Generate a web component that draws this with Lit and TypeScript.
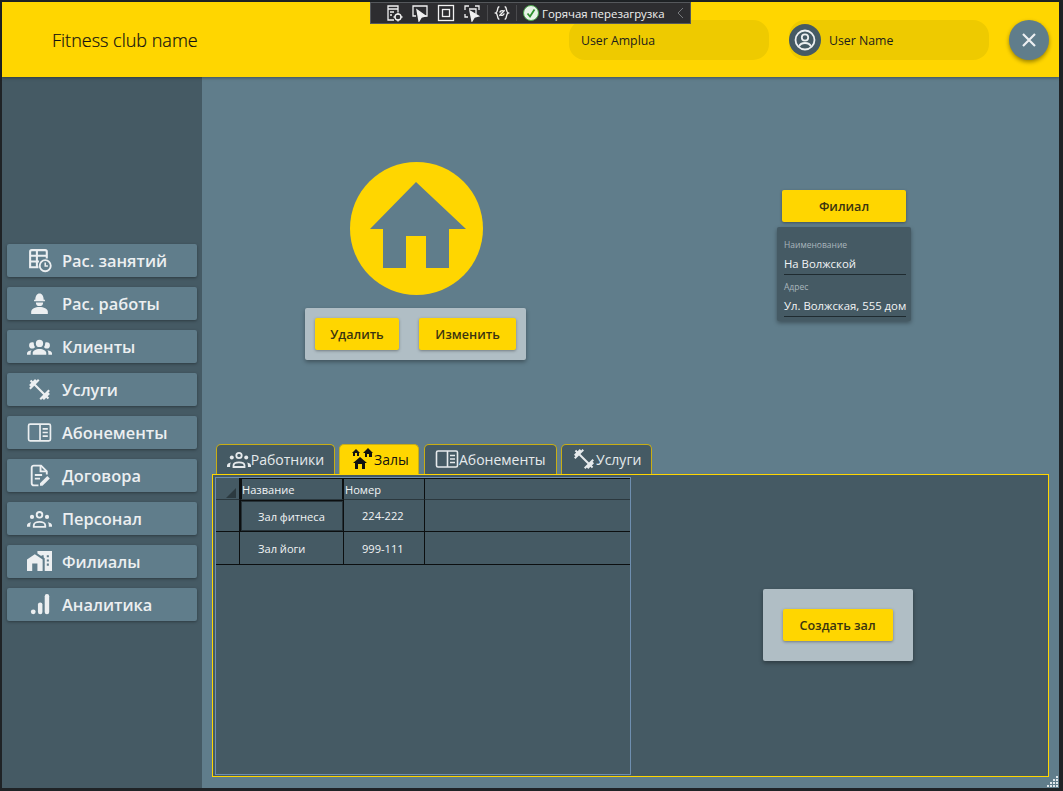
import { LitElement, html, css, svg } from 'lit';
import { customElement, state } from 'lit/decorators.js';

const icon = (body: unknown, cls = 'icon') =>
  html`<svg class=${cls} viewBox="0 0 24 24" fill="currentColor">${body}</svg>`;

const line = { fill: 'none', stroke: 'currentColor' };

const icons = {
  schedule: svg`<path d="M4 18.500H3V3.500A1.500 1.500 0 0 1 4.500 2h13A1.500 1.500 0 0 1 19 3.500V10M3 7.500h16M3 13h8.500M3 18.500h8M9.500 2v16.500" fill=${line.fill} stroke=${line.stroke} stroke-width="2"/><circle cx="17.500" cy="17" r="5.300" fill=${line.fill} stroke=${line.stroke} stroke-width="1.800"/><path d="M17.500 14v3.300h2.600" fill=${line.fill} stroke=${line.stroke} stroke-width="1.500"/>`,
  worker: svg`<path d="M8 8.500C8 5 9.500 2.400 12 2.400s4 2.600 4 6.100h1.200v1.300H6.800V8.500z"/><path d="M8.500 11h7a3.500 3.500 0 0 1-7 0z"/><path d="M4 22v-2c0-3 4-4.600 8-4.600s8 1.600 8 4.600v2z"/>`,
  group: svg`<path d="M12,5.500A3.500,3.500 0 0,1 15.500,9A3.500,3.500 0 0,1 12,12.500A3.500,3.500 0 0,1 8.500,9A3.500,3.500 0 0,1 12,5.500M5,8C5.560,8 6.080,8.150 6.530,8.420C6.380,9.850 6.800,11.270 7.660,12.380C7.160,13.340 6.160,14 5,14A3,3 0 0,1 2,11A3,3 0 0,1 5,8M19,8A3,3 0 0,1 22,11A3,3 0 0,1 19,14C17.840,14 16.840,13.340 16.340,12.380C17.200,11.270 17.620,9.850 17.470,8.420C17.920,8.150 18.440,8 19,8M5.500,18.250C5.500,16.180 8.410,14.500 12,14.500C15.590,14.500 18.500,16.180 18.500,18.250V20H5.500V18.250M0,20V18.500C0,17.110 1.890,15.940 4.450,15.600C3.860,16.280 3.500,17.220 3.500,18.250V20H0M24,20H20.500V18.250C20.500,17.220 20.140,16.280 19.550,15.600C22.110,15.940 24,17.110 24,18.500V20Z"/>`,
  groupOutline: svg`<circle cx="12" cy="8.500" r="2.700" fill=${line.fill} stroke=${line.stroke} stroke-width="1.800"/><path d="M6.500 20v-1.500c0-1.900 2.500-3.200 5.500-3.200s5.500 1.300 5.500 3.200V20z" fill=${line.fill} stroke=${line.stroke} stroke-width="1.800"/><circle cx="4.800" cy="10.500" r="2"/><circle cx="19.200" cy="10.500" r="2"/><path d="M0 20v-1.500c0-1.500 1.700-2.700 4-3-.6.800-.9 1.700-.9 2.800V20zM24 20v-1.500c0-1.500-1.700-2.700-4-3 .6.800.9 1.700.9 2.800V20z"/>`,
  dumbbell: svg`<path d="M20.570,14.860L22,13.430L20.570,12L17,15.570L8.430,7L12,3.430L10.570,2L9.140,3.430L7.710,2L5.570,4.140L4.140,2.710L2.710,4.140L4.140,5.570L2,7.710L3.430,9.140L2,10.570L3.430,12L7,8.430L15.570,17L12,20.570L13.430,22L14.860,20.570L16.290,22L18.430,19.860L19.860,21.290L21.290,19.860L19.860,18.430L22,16.290L20.570,14.860Z"/>`,
  book: svg`<rect x="1.500" y="4" width="21" height="16" rx="1.500" fill=${line.fill} stroke=${line.stroke} stroke-width="1.600"/><path d="M12.500 4v16M15 8.500h5M15 12h5M15 15.500h5" fill=${line.fill} stroke=${line.stroke} stroke-width="1.600"/>`,
  contract: svg`<path d="M11 21.500H6.500a2 2 0 0 1-2-2v-15a2 2 0 0 1 2-2h7l5.500 5.500v3" fill=${line.fill} stroke=${line.stroke} stroke-width="1.800"/><path d="M13 2.500v5.500h6M7.500 11.500h7M7.500 15h5" fill=${line.fill} stroke=${line.stroke} stroke-width="1.800"/><path d="M12.500 21.800v-2.400l7-7 2.400 2.400-7 7z"/>`,
  city: svg`<path d="M0,21V10L7.500,5L15,10V21H10V14H5V21H0M24,2V21H17V8.930L16,8.270V6H14V6.930L10,4.270V2H24M21,14H19V16H21V14M21,10H19V12H21V10M21,6H19V8H21V6Z"/>`,
  chart: svg`<circle cx="6" cy="19" r="2.300"/><rect x="10.500" y="10" width="4.300" height="11.400" rx="2.100"/><rect x="17" y="2" width="4.300" height="19.400" rx="2.100"/>`,
  halls: svg`<path d="M17,16H15V22H12V17H8V22H5V16H3L10,10L17,16M6,2L10,6H9V9H7V6H5V9H3V6H2L6,2M18,1L23,6H22V10H19V7H17V10H15V6H13L18,1Z"/>`,
};

const navItems = [
  { label: 'Рас. занятий', icon: icons.schedule },
  { label: 'Рас. работы', icon: icons.worker },
  { label: 'Клиенты', icon: icons.group },
  { label: 'Услуги', icon: icons.dumbbell },
  { label: 'Абонементы', icon: icons.book },
  { label: 'Договора', icon: icons.contract },
  { label: 'Персонал', icon: icons.groupOutline },
  { label: 'Филиалы', icon: icons.city },
  { label: 'Аналитика', icon: icons.chart },
];

const tabs = [
  { label: 'Работники', icon: icons.groupOutline, width: 119 },
  { label: 'Залы', icon: icons.halls, width: 80 },
  { label: 'Абонементы', icon: icons.book, width: 133 },
  { label: 'Услуги', icon: icons.dumbbell, width: 91 },
];

const rows = [
  { name: 'Зал фитнеса', number: '224-222', selected: true },
  { name: 'Зал йоги', number: '999-111' },
];

@customElement('app-root')
export class AppRoot extends LitElement {
  static styles = css`
    :host {
      display: block;
      width: 1063px;
      height: 100vh;
      background: #1f2326;
      font-family: 'Open Sans', 'Noto Sans', sans-serif;
      position: relative;
      overflow: hidden;
    }

    .window {
      position: absolute;
      inset: 2px 4px 3px 2px;
      display: flex;
      flex-direction: column;
      background: #607d8b;
    }

    header {
      flex: 0 0 75px;
      display: flex;
      align-items: center;
      gap: 20px;
      padding: 0 10px 0 50px;
      background: #ffd600;
      box-shadow: 0 1px 3px rgba(0, 0, 0, 0.35);
      z-index: 1;
    }

    .title {
      flex: 1;
      font-size: 18px;
      font-weight: 300;
      color: #111;
      -webkit-text-stroke: 0.2px #111;
    }

    .pill {
      width: 200px;
      height: 40px;
      box-sizing: border-box;
      display: flex;
      align-items: center;
      gap: 8px;
      padding: 1px 0 0 12px;
      border-radius: 16px;
      background: #eeca00;
      font-size: 12.3px;
      color: #1c1c1c;
    }

    .pill.user {
      padding-left: 0;
    }

    .avatar {
      width: 32px;
      height: 32px;
      margin-top: -1px;
      border-radius: 50%;
      background: #455a64;
      color: #eceff1;
      display: flex;
      align-items: center;
      justify-content: center;
    }

    .avatar svg {
      width: 24px;
      height: 24px;
    }

    .close {
      width: 40px;
      height: 40px;
      border-radius: 50%;
      background: #607d8b;
      color: #eceff1;
      display: flex;
      align-items: center;
      justify-content: center;
      box-shadow: 0 2px 4px rgba(0, 0, 0, 0.4);
    }

    .close svg {
      width: 24px;
      height: 24px;
    }

    .body {
      flex: 1;
      display: flex;
      min-height: 0;
    }

    .sidebar {
      flex: 0 0 200px;
      box-sizing: border-box;
      display: flex;
      flex-direction: column;
      gap: 10px;
      padding: 167px 5px 0 5px;
      background: #455a64;
    }

    .nav {
      height: 33px;
      box-sizing: border-box;
      display: flex;
      align-items: center;
      background: #607d8b;
      border-radius: 2px;
      color: #eceff1;
      font-size: 16.4px;
      font-weight: 600;
      box-shadow: 0 1px 3px rgba(0, 0, 0, 0.35);
    }

    .nav .slot {
      flex: 0 0 55px;
      display: flex;
      justify-content: flex-end;
      padding-right: 10px;
      box-sizing: border-box;
    }

    .nav .icon {
      width: 25px;
      height: 25px;
    }

    .main {
      flex: 1;
      min-width: 0;
      display: flex;
      flex-direction: column;
      padding-left: 10px;
      padding-right: 10px;
    }

    .top {
      flex: 0 0 367px;
      display: flex;
      box-sizing: border-box;
    }

    .hero {
      display: flex;
      flex-direction: column;
      align-items: center;
      width: 221px;
      margin: 85px 0 0 93px;
    }

    .hero svg {
      width: 133px;
      height: 133px;
      display: block;
      margin-left: 2px;
    }

    .actions {
      display: flex;
      gap: 20px;
      margin-top: 13px;
      padding: 10px;
      background: #b0bec5;
      border-radius: 2px;
      box-shadow: 0 2px 4px rgba(0, 0, 0, 0.35);
    }

    .btn {
      height: 32px;
      display: flex;
      align-items: center;
      justify-content: center;
      box-sizing: border-box;
      background: #ffd600;
      border-radius: 2px;
      color: #3a3410;
      font-size: 12.6px;
      font-weight: 600;
      box-shadow: 0 1px 3px rgba(0, 0, 0, 0.35);
    }

    .branch {
      width: 134px;
      margin: 113px 0 0 251px;
    }

    .branch .btn {
      width: 124px;
      margin: 0 0 5px 5px;
    }

    .card {
      box-sizing: border-box;
      height: 94px;
      padding: 12px 5px 0 7px;
      background: #455a64;
      border-radius: 2px;
      box-shadow: 0 2px 4px rgba(0, 0, 0, 0.35);
      color: #f2f4f5;
      font-size: 11.35px;
    }

    .card .caption {
      font-size: 8.5px;
      color: #aab6bc;
      line-height: 12px;
    }

    .card .value {
      line-height: 18px;
      padding: 4px 0 1px;
      margin-bottom: 6px;
      border-bottom: 1px solid #1f2b30;
      white-space: nowrap;
    }

    .tabs {
      flex: 0 0 30px;
      display: flex;
      gap: 4px;
      padding-left: 4px;
    }

    .tabs .tab + .tab {
      margin-left: 0.4px;
    }

    .tab {
      box-sizing: border-box;
      display: flex;
      align-items: center;
      justify-content: center;
      padding-bottom: 1px;
      background: #455a64;
      border: 1px solid #c9ae14;
      border-bottom: none;
      border-radius: 5px 5px 0 0;
      color: #e6eaec;
      font-size: 14px;
    }

    .tab.active {
      background: #ffd600;
      color: #111;
    }

    .tab .icon {
      width: 24px;
      height: 24px;
    }

    .panel {
      height: 303px;
      box-sizing: border-box;
      display: flex;
      padding: 2px 1px 1px 2px;
      background: #455a64;
      border: 1px solid #ffd600;
    }

    .table {
      flex: 0 0 416px;
      box-sizing: border-box;
      border: 1px solid #6f8fb0;
      display: grid;
      grid-template-columns: 24px 104px 81px 1fr;
      grid-template-rows: 22px 32px 33px 1fr;
      font-size: 11.1px;
      color: #f2f4f5;
    }

    .cell {
      box-sizing: border-box;
      display: flex;
      align-items: center;
      border-right: 1px solid #0c0f10;
      border-bottom: 1px solid #0c0f10;
    }

    .cell.name {
      padding-left: 18px;
    }

    .cell.name.selected {
      padding-left: 17px;
    }

    .cell.number {
      padding-left: 18px;
    }

    .cell.last {
      border-right: none;
    }

    .head {
      padding-left: 1px;
      border-top: 1px solid #0c0f10;
      border-bottom-color: #2b383e;
    }

    .head.title-cell {
      border-left: 2px solid #0c0f10;
      border-right: 2px solid #0c0f10;
      padding-left: 0;
    }

    .corner {
      position: relative;
      border-top: none;
    }

    .corner::after {
      content: '';
      position: absolute;
      right: 3px;
      bottom: 1px;
      border-style: solid;
      border-width: 0 0 10px 10px;
      border-color: transparent transparent #2c3a40 transparent;
    }

    .cell.selected {
      border: 1px solid #0c0f10;
      box-shadow: inset 0 0 0 1px #263238;
    }

    .filler {
      grid-column: 1 / -1;
    }

    .side {
      flex: 1;
      display: flex;
      align-items: center;
      justify-content: center;
      padding-right: 3px;
    }

    .create {
      margin-top: -2px;
      padding: 20px;
      background: #b0bec5;
      border-radius: 2px;
      box-shadow: 0 2px 4px rgba(0, 0, 0, 0.35);
    }

    .create .btn {
      width: 110px;
    }

    .grip {
      position: absolute;
      right: 1px;
      bottom: 1px;
      width: 14px;
      height: 14px;
      display: grid;
      grid-template-columns: repeat(4, 2px);
      grid-auto-rows: 2px;
      gap: 1px;
      justify-content: end;
      align-content: end;
    }

    .grip i {
      background: #dfe7ec;
    }

    .grip i.off {
      background: none;
    }

    .devbar {
      position: absolute;
      left: 370px;
      top: 2px;
      width: 321px;
      height: 22px;
      box-sizing: border-box;
      display: flex;
      align-items: center;
      gap: 8px;
      padding-left: 14px;
      background: #2d2d30;
      border: 1px solid #55585c;
      color: #f1f1f1;
      font-size: 11.4px;
      z-index: 2;
      white-space: nowrap;
    }

    .devbar svg {
      width: 18px;
      height: 18px;
      flex: none;
    }

    .devbar svg.braces {
      width: 16px;
      height: 16px;
    }

    .devbar .sep {
      width: 1px;
      height: 16px;
      background: #4a4a4d;
      margin: 0 -2px;
    }

    .devbar svg.ok {
      width: 16px;
      height: 16px;
    }

    .devbar .label {
      margin-left: -5px;
    }

    .devbar svg.chevron {
      margin-left: auto;
      margin-right: 2px;
      width: 14px;
      height: 14px;
      color: #77797c;
    }
  `;

  @state()
  private activeTab = 'Залы';

  render() {
    return html`
      ${this.renderDevBar()}
      <div class="window">
        ${this.renderHeader()}
        <div class="body">
          ${this.renderSidebar()}
          <div class="main">
            ${this.renderTop()} ${this.renderTabs()} ${this.renderPanel()}
          </div>
        </div>
        <div class="grip">
          ${[0, 0, 0, 1, 0, 0, 1, 1, 0, 1, 1, 1, 1, 1, 1, 1].map(
            (on) => html`<i class=${on ? '' : 'off'}></i>`,
          )}
        </div>
      </div>
    `;
  }

  private renderDevBar() {
    return html`<div class="devbar">
      <svg viewBox="0 0 18 18" fill="none" stroke="#f1f1f1" stroke-width="1.300">
        <path d="M9 16H3V2h10v6M3 5h10M5 8h4M5 11h2" />
        <circle cx="13" cy="13" r="3" />
        <path d="M13 8.500v2M13 15.500v2M8.500 13h2M15.500 13h2" />
      </svg>
      <svg viewBox="0 0 18 18" fill="none" stroke="#f1f1f1" stroke-width="1.300">
        <path d="M5 12H2V2h14v10h-3" />
        <path d="M6 6l2 11 2.500-4 4-1z" fill="#f1f1f1" />
      </svg>
      <svg viewBox="0 0 18 18" fill="none" stroke="#f1f1f1" stroke-width="1.300">
        <rect x="1.500" y="1.500" width="15" height="15" />
        <rect x="5.500" y="5.500" width="7" height="7" />
      </svg>
      <svg viewBox="0 0 18 18" fill="none" stroke="#f1f1f1" stroke-width="1.300">
        <path d="M2 6V2h4M12 2h4v4M2 10v3h3M6 5h7v5" />
        <path d="M7 7l2 10 2.500-4 4-1z" fill="#f1f1f1" />
      </svg>
      <span class="sep"></span>
      <svg class="braces" viewBox="0 0 18 18" fill="none" stroke="#f1f1f1" stroke-width="1.500">
        <path d="M6 2C3 2 5 8 2 9c3 1 1 7 4 7M12 2c3 0 1 6 4 7-3 1-1 7-4 7" />
        <path d="M6 12l6-6M6.500 8.500a3 3 0 0 1 4-2M11.500 9.500a3 3 0 0 1-4 2" />
      </svg>
      <span class="sep"></span>
      <svg class="ok" viewBox="0 0 16 16">
        <circle cx="8" cy="8" r="7.500" fill="#e8f3e8" stroke="#4da64d" />
        <path d="M4.500 8.500l2.500 3 4.500-7" fill="none" stroke="#2f8f2f" stroke-width="1.800" />
      </svg>
      <span class="label">Горячая перезагрузка</span>
      <svg class="chevron" viewBox="0 0 14 14" fill="none" stroke="currentColor">
        <path d="M9 2L4 7l5 5" />
      </svg>
    </div>`;
  }

  private renderHeader() {
    return html`<header>
      <div class="title">Fitness club name</div>
      <div class="pill">User Amplua</div>
      <div class="pill user">
        <span class="avatar">
          <svg viewBox="0 0 24 24" fill="none" stroke="currentColor" stroke-width="1.800">
            <circle cx="12" cy="12" r="9.500" />
            <circle cx="12" cy="9.500" r="3.200" />
            <path d="M6 18.500c1-2.500 3.500-3.500 6-3.500s5 1 6 3.500" />
          </svg>
        </span>
        User Name
      </div>
      <div class="close">
        <svg viewBox="0 0 24 24" fill="none" stroke="currentColor" stroke-width="2.200">
          <path d="M6 6l12 12M18 6L6 18" />
        </svg>
      </div>
    </header>`;
  }

  private renderSidebar() {
    return html`<nav class="sidebar">
      ${navItems.map(
        (item) => html`<div class="nav">
          <span class="slot">${icon(item.icon)}</span>${item.label}
        </div>`,
      )}
    </nav>`;
  }

  private renderTop() {
    return html`<section class="top">
      <div class="hero">
        <svg viewBox="0 0 133 133">
          <circle cx="66.500" cy="66.500" r="66.500" fill="#ffd600" />
          <path
            d="M66 20L116 67H99V106H76V74H56V106H33V67H20Z"
            fill="#607d8b"
          />
        </svg>
        <div class="actions">
          <div class="btn" style="width: 84px">Удалить</div>
          <div class="btn" style="width: 97px">Изменить</div>
        </div>
      </div>
      <div class="branch">
        <div class="btn">Филиал</div>
        <div class="card">
          <div class="caption">Наименование</div>
          <div class="value">На Волжской</div>
          <div class="caption">Адрес</div>
          <div class="value">Ул. Волжская, 555 дом</div>
        </div>
      </div>
    </section>`;
  }

  private renderTabs() {
    return html`<div class="tabs">
      ${tabs.map(
        (tab) => html`<div
          class="tab ${tab.label === this.activeTab ? 'active' : ''}"
          style="width: ${tab.width}px"
          @click=${() => (this.activeTab = tab.label)}
        >
          ${icon(tab.icon)}${tab.label}
        </div>`,
      )}
    </div>`;
  }

  private renderPanel() {
    return html`<section class="panel">
      <div class="table">
        <div class="cell head corner"></div>
        <div class="cell head title-cell">Название</div>
        <div class="cell head">Номер</div>
        <div class="cell head last"></div>
        ${rows.map(
          (row) => html`
            <div class="cell"></div>
            <div class="cell name ${row.selected ? 'selected' : ''}">${row.name}</div>
            <div class="cell number">${row.number}</div>
            <div class="cell last"></div>
          `,
        )}
        <div class="filler"></div>
      </div>
      <div class="side">
        <div class="create"><div class="btn">Создать зал</div></div>
      </div>
    </section>`;
  }
}
